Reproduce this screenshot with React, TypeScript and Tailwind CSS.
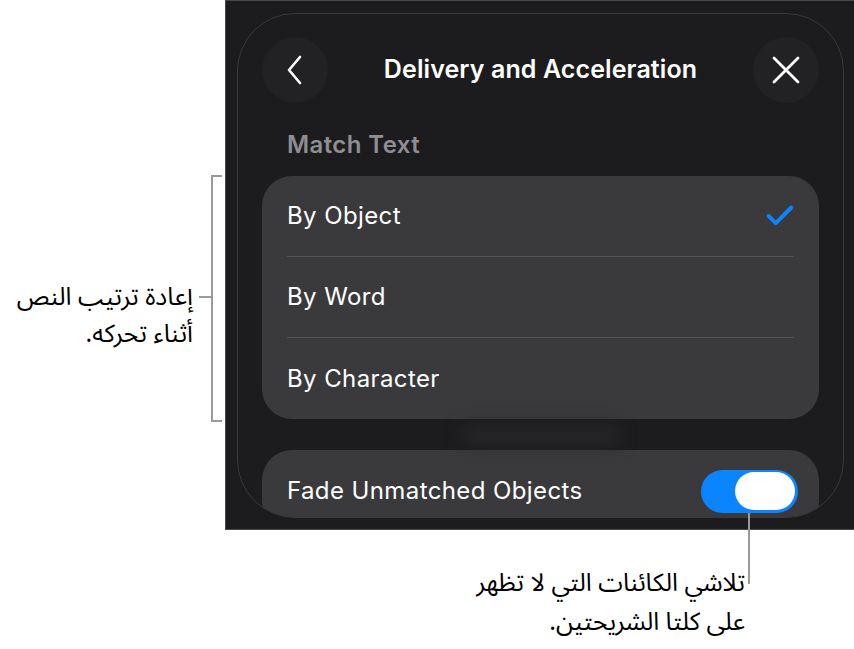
import { Check } from "lucide-react";

const options = ["By Object", "By Word", "By Character"];

function CircleButton({ children }: { children: React.ReactNode }) {
  return (
    <button
      type="button"
      className="flex h-[66px] w-[66px] items-center justify-center rounded-full bg-[#222224] text-white"
    >
      {children}
    </button>
  );
}

const arabic = { fontFamily: "'Noto Sans Arabic', 'DejaVu Sans', sans-serif" };

export default function App() {
  return (
    <div
      className="relative h-[649px] w-[854px] overflow-hidden bg-white text-black"
      style={{ fontFamily: "Inter, 'Noto Sans', 'DejaVu Sans', sans-serif" }}
    >
      <div className="flex">
        {/* Left callout */}
        <div className="flex h-[530px] w-[225px] justify-end pt-[175px]">
          <div className="flex h-[247px] items-start">
            <p
              dir="rtl"
              className="mr-[6px] mt-[104px] whitespace-nowrap text-right text-[25px] leading-[37px]"
              style={arabic}
            >
              إعادة ترتيب النص
              <br />
              أثناء تحركه.
            </p>
            <div className="mt-[121px] h-[2px] w-[12px] bg-[#9a9a9a]" />
            <div className="mr-[3px] h-[247px] w-[11px] border-2 border-r-0 border-[#9a9a9a]" />
          </div>
        </div>

        {/* Screenshot */}
        <div className="h-[530px] w-[629px] border-y border-l border-[#48484a] bg-[#1c1c1e] pl-[11px] pt-[12px]">
          <div className="h-[505px] w-[607px] overflow-hidden rounded-[58px] border border-[#3a3a3c] px-[24px]">
            {/* Header */}
            <div className="mt-[23px] flex items-center justify-between">
              <CircleButton>
                <svg width="20" height="32" viewBox="0 0 20 32" fill="none">
                  <path d="M15 3 L4 16 L15 29" stroke="currentColor" strokeWidth="2.6" strokeLinecap="round" strokeLinejoin="round" />
                </svg>
              </CircleButton>
              <h1 className="text-[25px] font-semibold tracking-[0.1px] text-white">
                Delivery and Acceleration
              </h1>
              <CircleButton>
                <svg width="30" height="30" viewBox="0 0 30 30" fill="none">
                  <path d="M3 3 L27 27 M27 3 L3 27" stroke="currentColor" strokeWidth="2.8" strokeLinecap="round" />
                </svg>
              </CircleButton>
            </div>

            <div className="mt-[28px] px-[25px] text-[24px] font-semibold leading-[28px] tracking-[0.4px] text-[#8e8e93]">
              Match Text
            </div>

            {/* Options */}
            <div className="mt-[17px] rounded-[30px] bg-[#3a3a3c] px-[25px]">
              {options.map((o, i) => (
                <div
                  key={o}
                  className={`flex h-[81px] items-center justify-between text-[24px] tracking-[0.4px] text-white ${
                    i < options.length - 1 ? "border-b border-[#545458]" : ""
                  }`}
                >
                  <span>{o}</span>
                  {i === 0 && <Check size={34} strokeWidth={2.8} className="mr-[-3px] text-[#0a84ff]" />}
                </div>
              ))}
            </div>

            <div className="flex h-[31px] items-center justify-center">
              <div className="h-[20px] w-[160px] rounded-full bg-[#262628] blur-[8px]" />
            </div>

            {/* Fade toggle */}
            <div className="flex h-[82px] items-center justify-between rounded-[30px] bg-[#3a3a3c] pl-[25px] pr-[21px] text-[24px] tracking-[0.4px] text-white">
              <span>Fade Unmatched Objects</span>
              <div className="flex h-[43px] w-[97px] items-center justify-end rounded-full bg-[#0a84ff] pr-[3px]">
                <div className="h-[38px] w-[60px] rounded-full bg-white" />
              </div>
            </div>
          </div>
        </div>
      </div>

      {/* Bottom callout */}
      <div className="absolute left-[748px] top-[513px] h-[71px] w-[2px] bg-[#9a9a9a]" />
      <div className="flex justify-end pr-[109px] pt-[34px]">
        <p dir="rtl" className="whitespace-nowrap text-right text-[25px] leading-[39px]" style={arabic}>
          تلاشي الكائنات التي لا تظهر
          <br />
          على كلتا الشريحتين.
        </p>
      </div>
    </div>
  );
}
